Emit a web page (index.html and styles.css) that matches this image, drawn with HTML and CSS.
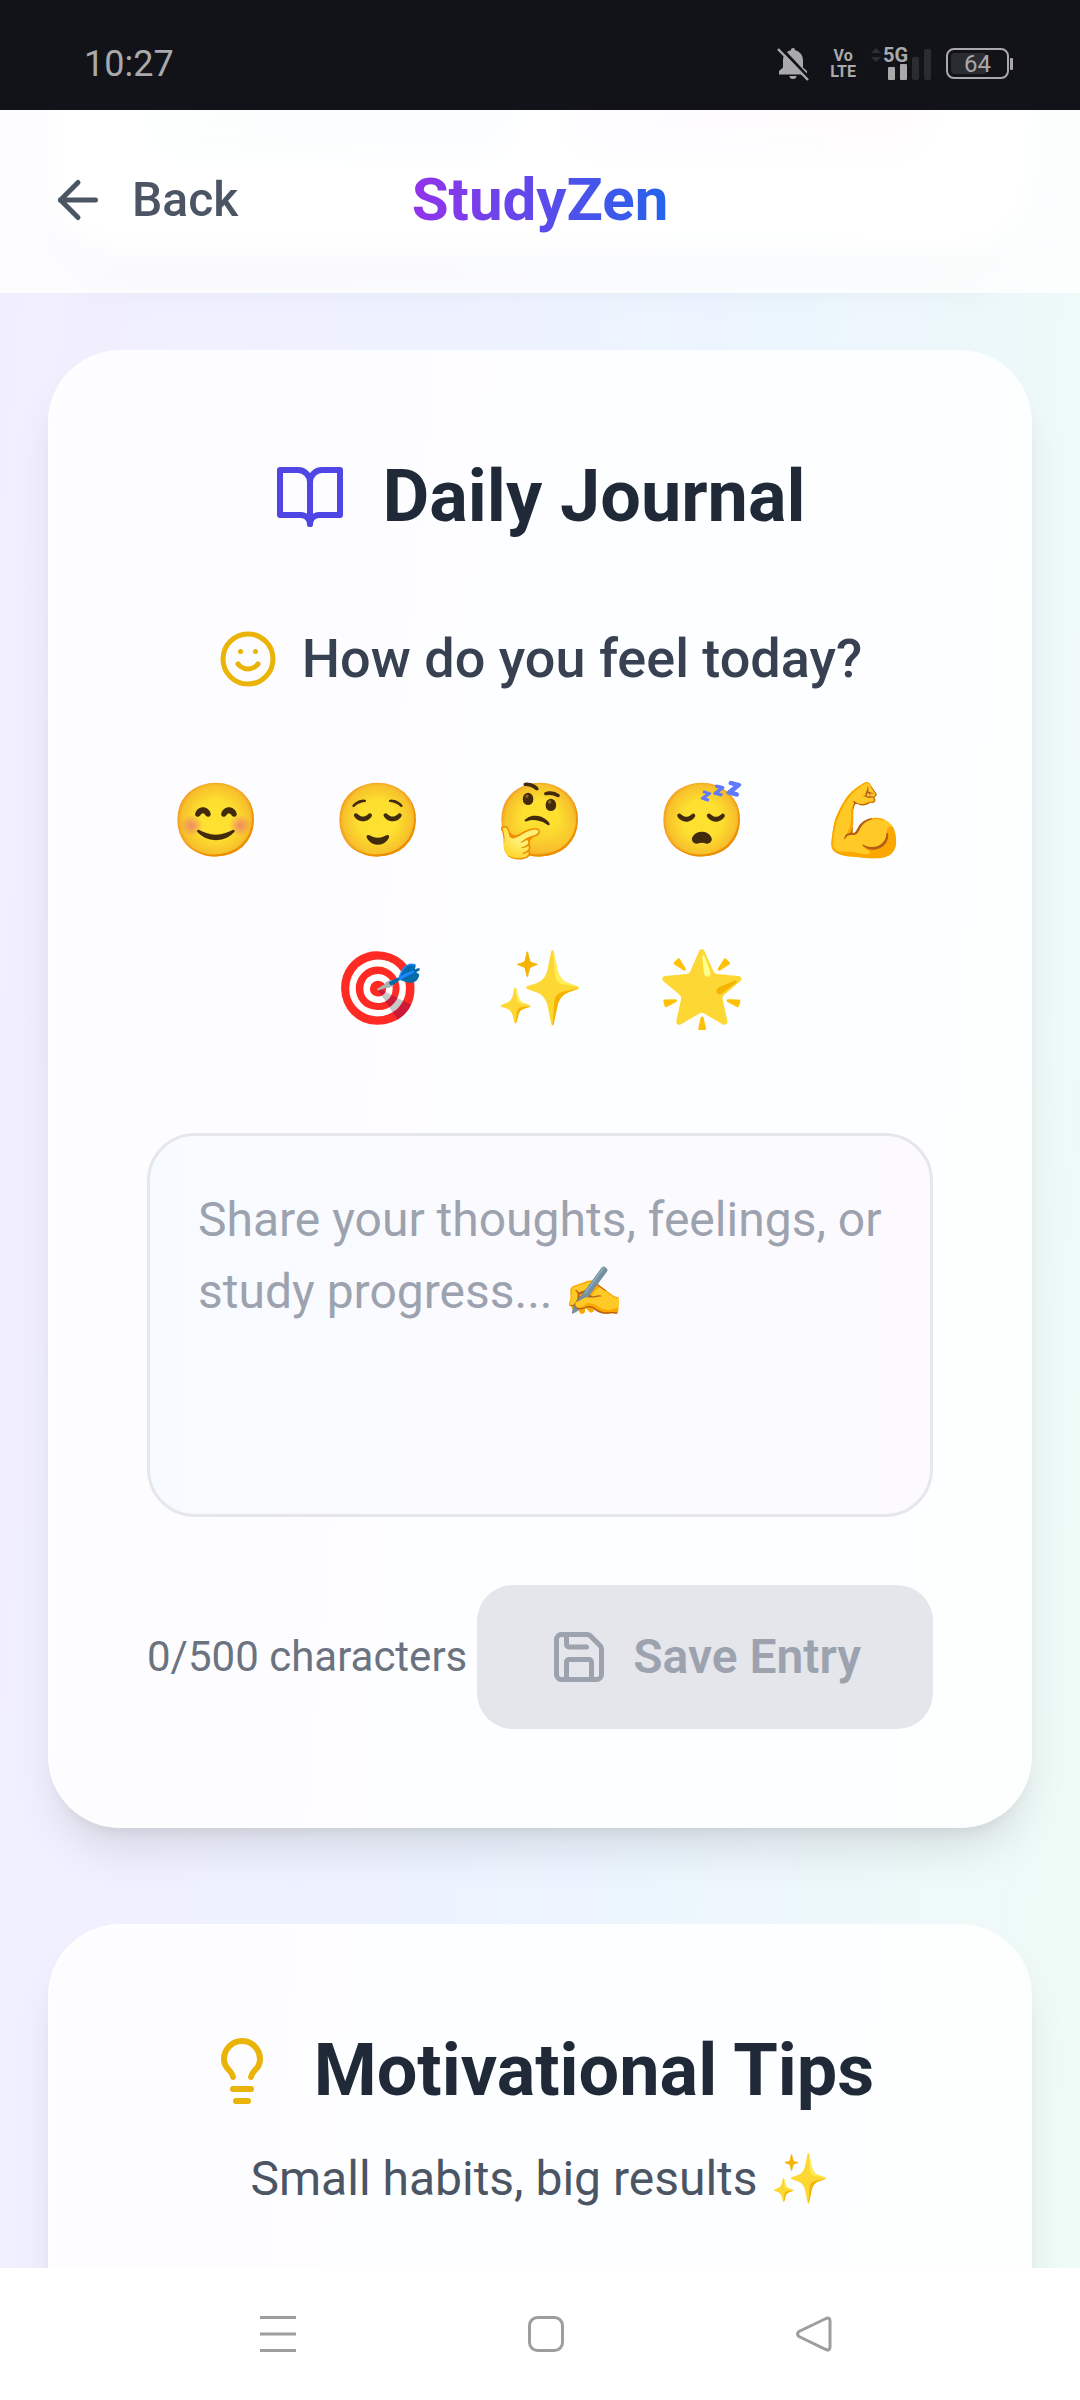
FILE: index.html
```html
<!DOCTYPE html>
<html lang="en">
<head>
  <meta charset="UTF-8" />
  <meta name="viewport" content="width=device-width, initial-scale=1.0"/>
  <title>StudyZen</title>
  <link rel="stylesheet" href="styles.css">
</head>
<body>

<!-- Status bar -->
<div class="status-bar">
  <span class="status-time">10:27</span>
  <div class="status-icons">
    <svg class="bell-icon" width="32" height="34" viewBox="0 0 32 34">
      <path d="M16 1c1.400 0 2 .8 2 2.200 5 1.200 8 5 8 10.300v7l4 3.500v3.500H2V24l4-3.500v-7C6 8.200 9 4.400 14 3.200 14 1.800 14.600 1 16 1z" fill="#a9a9ab"/>
      <path d="M12.500 29h7a3.500 3 0 0 1-7 0z" fill="#a9a9ab"/>
      <path d="M4 1l28 30" stroke="#121318" stroke-width="3"/>
      <path d="M1 2l30 31" stroke="#a9a9ab" stroke-width="2.500"/>
    </svg>
    <span class="volte"><span>Vo</span><span>LTE</span></span>
    <div class="signal">
      <svg width="60" height="34" viewBox="0 0 60 34">
        <path d="M0 6l5-5 5 5zM0 10l5 5 5-5z" fill="#2e2f34"/>
        <rect x="17" y="20" width="7" height="13" rx="1" fill="#a9a9ab"/>
        <rect x="29" y="17" width="7" height="16" rx="1" fill="#a9a9ab"/>
        <rect x="41" y="10" width="7" height="23" rx="2" fill="#2b2c31"/>
        <rect x="53" y="2" width="7" height="31" rx="2" fill="#2b2c31"/>
      </svg>
      <span class="network">5G</span>
    </div>
    <div class="battery">
      <svg width="67" height="32" viewBox="0 0 67 32">
        <rect x="1" y="1" width="61" height="29" rx="7" fill="none" stroke="#a9a9ab" stroke-width="2"/>
        <rect x="5" y="5" width="36" height="21" rx="4" fill="#2b2c31"/>
        <rect x="64" y="10" width="3" height="12" rx="1" fill="#a9a9ab"/>
      </svg>
      <span class="battery-level">64</span>
    </div>
  </div>
</div>

<!-- Header -->
<header class="header">
  <button type="button" class="back-button">
    <svg class="icon-md" viewBox="0 0 24 24"><path d="m12 19-7-7 7-7"/><path d="M19 12H5"/></svg>
    <span>Back</span>
  </button>
  <h1 class="logo">StudyZen</h1>
</header>

<main class="content">
  <!-- End of the card above, under the header -->
  <section class="card stats-card">
    <div class="stat stat-green"></div>
    <div class="stat stat-purple"></div>
  </section>

  <!-- Journal -->
  <section class="card">
    <h2 class="card-title">
      <svg class="icon-lg indigo" viewBox="0 0 24 24"><path d="M2 3h6a4 4 0 0 1 4 4v14a3 3 0 0 0-3-3H2z"/><path d="M22 3h-6a4 4 0 0 0-4 4v14a3 3 0 0 1 3-3h7z"/></svg>
      <span>Daily Journal</span>
    </h2>

    <h3 class="question">
      <svg class="icon-md yellow" viewBox="0 0 24 24"><circle cx="12" cy="12" r="10"/><path d="M8 14s1.500 2 4 2 4-2 4-2"/><path d="M9 9h.01"/><path d="M15 9h.01"/></svg>
      <span>How do you feel today?</span>
    </h3>

    <div class="moods">
      <button type="button" class="mood" aria-label="Happy">😊</button>
      <button type="button" class="mood" aria-label="Calm">😌</button>
      <button type="button" class="mood" aria-label="Thoughtful">🤔</button>
      <button type="button" class="mood" aria-label="Sleepy">😴</button>
      <button type="button" class="mood" aria-label="Strong">💪</button>
      <button type="button" class="mood" aria-label="Focused">🎯</button>
      <button type="button" class="mood" aria-label="Inspired">✨</button>
      <button type="button" class="mood" aria-label="Great">🌟</button>
    </div>

    <textarea class="entry" maxlength="500" aria-label="Journal entry" placeholder="Share your thoughts, feelings, or study progress... ✍️"></textarea>

    <div class="entry-footer">
      <span class="counter">0/500 characters</span>
      <button type="submit" class="save-button" disabled>
        <svg class="icon-md" viewBox="0 0 24 24"><path d="M15.200 3a2 2 0 0 1 1.400.6l3.800 3.800a2 2 0 0 1 .6 1.400V19a2 2 0 0 1-2 2H5a2 2 0 0 1-2-2V5a2 2 0 0 1 2-2z"/><path d="M17 21v-7a1 1 0 0 0-1-1H8a1 1 0 0 0-1 1v7"/><path d="M7 3v4a1 1 0 0 0 1 1h7"/></svg>
        <span>Save Entry</span>
      </button>
    </div>
  </section>

  <!-- Tips -->
  <section class="card tips-card">
    <h2 class="card-title tips-title">
      <svg class="icon-lg yellow" viewBox="0 0 24 24"><path d="M15 14c.2-1 .7-1.700 1.500-2.500 1-.9 1.500-2.200 1.500-3.500A6 6 0 0 0 6 8c0 1 .2 2.200 1.500 3.500.7.7 1.300 1.500 1.500 2.500"/><path d="M9 18h6"/><path d="M10 22h4"/></svg>
      <span>Motivational Tips</span>
    </h2>
    <p class="subtitle">Small habits, big results ✨</p>
  </section>
</main>

<!-- System navigation -->
<nav class="system-nav">
  <button type="button" class="nav-button" aria-label="Recent apps">
    <svg width="36" height="36" viewBox="0 0 36 36"><path d="M0 1.500h36M0 18h36M0 34.500h36"/></svg>
  </button>
  <button type="button" class="nav-button" aria-label="Home">
    <svg width="36" height="36" viewBox="0 0 36 36"><rect x="1.500" y="1.500" width="33" height="33" rx="8"/></svg>
  </button>
  <button type="button" class="nav-button" aria-label="Go back">
    <svg width="36" height="36" viewBox="0 0 36 36"><path d="M30 2.500 3 15.500q-3 2.500 0 5L30 33.500q4 1.500 4-2.500V5q0-4-4-2.500z"/></svg>
  </button>
</nav>

</body>
</html>
```
FILE: styles.css
```css
* {
  box-sizing: border-box;
  margin: 0;
  padding: 0;
}

body {
  height: 100vh;
  display: flex;
  flex-direction: column;
  overflow: hidden;
  font-family: Roboto, "Noto Sans", sans-serif;
  font-size: 48px;
  line-height: 72px;
  color: #1f2937;
}

button {
  background: none;
  border: none;
  font: inherit;
  color: inherit;
  cursor: pointer;
}

svg {
  display: block;
  flex-shrink: 0;
}

/* Status bar */
.status-bar {
  height: 110px;
  flex-shrink: 0;
  padding: 18px 67px 0 84px;
  display: flex;
  align-items: center;
  justify-content: space-between;
  background-color: #121318;
  color: #a9a9ab;
}

.status-time {
  font-size: 36px;
  line-height: 40px;
}

.status-icons {
  display: flex;
  align-items: center;
  gap: 15px;
}

.bell-icon {
  margin-right: 6px;
}

.volte {
  display: flex;
  flex-direction: column;
  align-items: center;
  font-size: 16px;
  font-weight: 700;
  line-height: 16px;
}

.signal,
.battery {
  position: relative;
}

.network {
  position: absolute;
  top: 0;
  left: 12px;
  font-size: 20px;
  font-weight: 700;
  line-height: 16px;
}

.battery-level {
  position: absolute;
  top: 0;
  left: 18px;
  font-size: 24px;
  line-height: 32px;
}

/* Header */
.header {
  position: relative;
  z-index: 10;
  flex-shrink: 0;
  margin-bottom: -183px;
  padding: 48px;
  display: grid;
  grid-template-columns: 1fr auto 1fr;
  align-items: center;
  background-color: rgba(255, 255, 255, 0.8);
  backdrop-filter: blur(12px);
  border-bottom: 3px solid rgba(255, 255, 255, 0.2);
}

.back-button {
  justify-self: start;
  display: flex;
  align-items: center;
  gap: 24px;
  font-weight: 500;
  color: #4b5563;
}

.logo {
  font-size: 60px;
  line-height: 84px;
  font-weight: 700;
  background: linear-gradient(to right, #9333ea, #2563eb);
  background-clip: text;
  -webkit-background-clip: text;
  color: transparent;
}

/* Icons */
.icon-md,
.icon-lg {
  fill: none;
  stroke: currentColor;
  stroke-width: 2;
  stroke-linecap: round;
  stroke-linejoin: round;
}

.icon-md {
  width: 60px;
  height: 60px;
}

.icon-lg {
  width: 72px;
  height: 72px;
}

.indigo {
  color: #4f46e5;
}

.yellow {
  color: #eab308;
}

/* Content */
.content {
  flex: 1;
  min-height: 0;
  overflow: hidden;
  padding: 0 48px;
  display: flex;
  flex-direction: column;
  gap: 96px;
  background: linear-gradient(95deg, #f2eefe, #ecf5ff 58%, #effbf6);
}

.card {
  flex-shrink: 0;
  padding: 96px;
  background-color: rgba(255, 255, 255, 0.85);
  border: 3px solid rgba(255, 255, 255, 0.2);
  border-radius: 72px;
  box-shadow: 0 30px 45px -9px rgba(0, 0, 0, 0.1), 0 12px 18px -12px rgba(0, 0, 0, 0.1);
}

.stats-card {
  padding-top: 0;
  border-top: none;
  border-radius: 0 0 72px 72px;
  box-shadow: 0 30px 45px -9px rgba(0, 0, 0, 0.1);
  display: grid;
  grid-template-columns: 1fr 1fr;
  gap: 48px;
}

.stat {
  height: 45px;
  border-radius: 0 0 48px 48px;
}

.stat-green {
  background: linear-gradient(to right, #ecfdf3, #e8f3ff);
}

.stat-purple {
  background: linear-gradient(to right, #f8f2ff, #fdf0f7);
}

.card-title {
  display: flex;
  align-items: center;
  justify-content: center;
  gap: 36px;
  margin-bottom: 72px;
  font-size: 72px;
  line-height: 96px;
  font-weight: 700;
}

.question {
  display: flex;
  align-items: center;
  justify-content: center;
  gap: 24px;
  margin-bottom: 48px;
  font-size: 54px;
  line-height: 84px;
  font-weight: 500;
  color: #374151;
}

.moods {
  display: flex;
  flex-wrap: wrap;
  justify-content: center;
  gap: 24px;
  margin-bottom: 72px;
}

.mood {
  padding: 24px;
  border-radius: 36px;
  font-size: 72px;
  line-height: 96px;
}

.entry {
  display: block;
  width: 100%;
  height: 384px;
  margin-bottom: 68px;
  padding: 48px;
  border: 3px solid #e5e7eb;
  border-radius: 48px;
  background: linear-gradient(to right, #f7fbff, #fbfaff 50%, #fcfaff);
  font: inherit;
  color: inherit;
  resize: none;
}

.entry::placeholder {
  color: #9ca3af;
}

.entry-footer {
  display: flex;
  align-items: center;
  justify-content: space-between;
}

.counter {
  font-size: 42px;
  line-height: 60px;
  color: #6b7280;
  white-space: nowrap;
}

.save-button {
  display: flex;
  align-items: center;
  gap: 24px;
  padding: 36px 72px;
  border-radius: 36px;
  background-color: #e4e6eb;
  color: #9ca3af;
  font-weight: 600;
  white-space: nowrap;
  cursor: not-allowed;
}

.tips-card {
  padding-bottom: 192px;
}

.tips-title {
  margin-bottom: 24px;
}

.subtitle {
  text-align: center;
  color: #4b5563;
}

/* System navigation */
.system-nav {
  height: 132px;
  flex-shrink: 0;
  padding-left: 12px;
  display: flex;
  align-items: center;
  justify-content: center;
  gap: 232px;
  background-color: #fff;
}

.nav-button svg {
  fill: none;
  stroke: #9e9e9e;
  stroke-width: 3;
}
```
